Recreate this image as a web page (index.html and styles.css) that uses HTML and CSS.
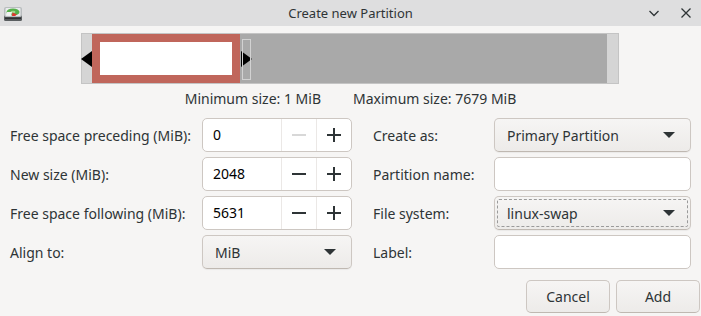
FILE: index.html
```html
<!doctype html>
<html>
<head>
    <meta charset="UTF-8">
    <title>Create new Partition</title>
    <link rel="stylesheet" href="styles.css">
</head>
<body>
<div class="win">
    <div class="titlebar">
        <svg class="app-icon" width="20" height="18" viewBox="0 0 20 18">
            <rect x="1" y="10" width="18" height="7" rx="1.5" fill="#5a5e60"/>
            <rect x="1" y="3" width="18" height="10" rx="2" fill="#b9bdbf"/>
            <rect x="2.5" y="4" width="15" height="8" rx="1" fill="#e9ebec"/>
            <ellipse cx="10" cy="8" rx="6.5" ry="3.6" fill="#55b04a"/>
            <ellipse cx="10" cy="8" rx="2.5" ry="1.3" fill="#9fd88a"/>
            <path d="M4 8 L9 8 L8 12 L4 11 Z" fill="#f2f2f2"/>
            <path d="M9.5 8.5 L14 10.5 L12 12 L9 12 Z" fill="#e0372f"/>
            <rect x="2" y="13.5" width="16" height="1.5" fill="#2f3133"/>
        </svg>
        <div class="title">Create new Partition</div>
        <div class="wm-btns">
            <svg width="16" height="16" viewBox="0 0 16 16"><path d="M3.5 6 L8 10.5 L12.5 6" fill="none" stroke="#2e3436" stroke-width="1.3"/></svg>
            <svg width="16" height="16" viewBox="0 0 16 16"><path d="M3.5 3.5 L12.5 12.5 M12.5 3.5 L3.5 12.5" fill="none" stroke="#2e3436" stroke-width="1.3"/></svg>
        </div>
    </div>

    <div class="content">
        <div class="bar">
            <div class="track">
                <div class="part"></div>
            </div>
            <div class="arrow arrow-left"></div>
            <div class="arrow arrow-right"></div>
            <div class="handle"></div>
        </div>
        <div class="limits">
            <span>Minimum size: 1 MiB</span>
            <span>Maximum size: 7679 MiB</span>
        </div>

        <div class="form">
            <div class="col col-left">
                <label>Free space preceding (MiB):</label>
                <div class="spin">
                    <span class="spin-val">0</span>
                    <span class="spin-btn off"><i class="minus"></i></span>
                    <span class="spin-btn"><i class="plus"></i></span>
                </div>
                <label>New size (MiB):</label>
                <div class="spin">
                    <span class="spin-val">2048</span>
                    <span class="spin-btn"><i class="minus"></i></span>
                    <span class="spin-btn"><i class="plus"></i></span>
                </div>
                <label>Free space following (MiB):</label>
                <div class="spin">
                    <span class="spin-val">5631</span>
                    <span class="spin-btn"><i class="minus"></i></span>
                    <span class="spin-btn"><i class="plus"></i></span>
                </div>
                <label>Align to:</label>
                <div class="combo"><span>MiB</span><i class="caret"></i></div>
            </div>
            <div class="col col-right">
                <label>Create as:</label>
                <div class="combo"><span>Primary Partition</span><i class="caret"></i></div>
                <label>Partition name:</label>
                <div class="entry"></div>
                <label>File system:</label>
                <div class="combo focus"><span>linux-swap</span><i class="caret"></i></div>
                <label>Label:</label>
                <div class="entry"></div>
            </div>
        </div>

        <div class="actions">
            <div class="btn">Cancel</div>
            <div class="btn">Add</div>
        </div>
    </div>
</div>
</body>
</html>
```

FILE: styles.css
```css
* {
    margin: 0;
    padding: 0;
    box-sizing: border-box;
}

body {
    width: 701px;
    height: 316px;
    overflow: hidden;
    background: #f6f5f4;
    font-family: "Noto Sans", "Open Sans", sans-serif;
    font-size: 14px;
    color: #2e3436;
}

.titlebar {
    height: 26px;
    background: #dededf;
    display: flex;
    align-items: center;
    position: relative;
}

.app-icon {
    margin-left: 3px;
}

.title {
    position: absolute;
    left: 0;
    right: 0;
    text-align: center;
    font-size: 13px;
    top: 4px;
}

.wm-btns {
    margin-left: auto;
    margin-right: 7px;
    display: flex;
    gap: 16px;
}

.content {
    padding-top: 7px;
}

/* partition graphic */
.bar {
    position: relative;
    width: 538px;
    height: 51px;
    margin-left: 81px;
    background: #d5d5d5;
    border: 1px solid #c4c4c4;
    padding: 0 11px 0 10px;
    display: flex;
}

.track {
    flex: 1;
    background: #a9a9a9;
    display: flex;
}

.part {
    width: 148px;
    border: 8px solid #c0665b;
    background: #fff;
}

.arrow {
    position: absolute;
    top: 17px;
    width: 0;
    height: 0;
    border-top: 8.5px solid transparent;
    border-bottom: 8.5px solid transparent;
}

.arrow-left {
    left: -1px;
    border-right: 11px solid #000;
}

.arrow-right {
    left: 159px;
    border-left: 11px solid #000;
}

.handle {
    position: absolute;
    left: 160px;
    top: 5px;
    width: 9px;
    height: 41px;
    border: 1px solid #d2d2d2;
}

.limits {
    display: flex;
    justify-content: center;
    gap: 32px;
    height: 34px;
    padding-top: 5px;
}

/* form */
.form {
    display: flex;
}

.col {
    display: grid;
    row-gap: 5px;
    grid-auto-rows: 34px;
    align-items: center;
}

.col-left {
    padding-left: 10px;
    grid-template-columns: 192px 150px;
}

.col-right {
    margin-left: 21px;
    grid-template-columns: 121px 197px;
}

.spin, .entry, .combo {
    height: 34px;
    border: 1px solid #cdc7c2;
    border-radius: 5px;
}

.spin, .entry {
    background: #fff;
}

.spin {
    display: flex;
    align-items: stretch;
}

.spin-val {
    flex: 1;
    padding-left: 10px;
    line-height: 32px;
    color: #000;
}

.spin-btn {
    width: 35px;
    border-left: 1px solid #ebe8e6;
    display: flex;
    align-items: center;
    justify-content: center;
}

.spin-btn i {
    position: relative;
    width: 14px;
    height: 14px;
}

.minus::before, .plus::before, .plus::after {
    content: "";
    position: absolute;
    background: #2e3436;
}

.minus::before, .plus::before {
    left: 0;
    right: 0;
    top: 6px;
    height: 2px;
}

.plus::after {
    top: 0;
    bottom: 0;
    left: 6px;
    width: 2px;
}

.off .minus::before {
    background: #d8d8d8;
}

.combo {
    display: flex;
    align-items: center;
    padding: 0 15px 0 12px;
    background: linear-gradient(#f6f5f4, #edebe9);
    border-bottom-color: #bfb8b1;
    box-shadow: 0 1px 1px rgba(0, 0, 0, 0.05);
}

.combo span {
    flex: 1;
}

.combo.focus {
    outline: 1px dashed #9a9a9a;
    outline-offset: -4px;
}

.caret {
    width: 0;
    height: 0;
    border-left: 6px solid transparent;
    border-right: 6px solid transparent;
    border-top: 6px solid #2e3436;
}

.actions {
    display: flex;
    justify-content: flex-end;
    gap: 6px;
    margin-top: 11px;
    padding-right: 1px;
}

.btn {
    width: 84px;
    height: 33px;
    line-height: 31px;
    text-align: center;
    border: 1px solid #cdc7c2;
    border-bottom-color: #bfb8b1;
    border-radius: 5px;
    background: linear-gradient(#f6f5f4, #edebe9);
}
```
